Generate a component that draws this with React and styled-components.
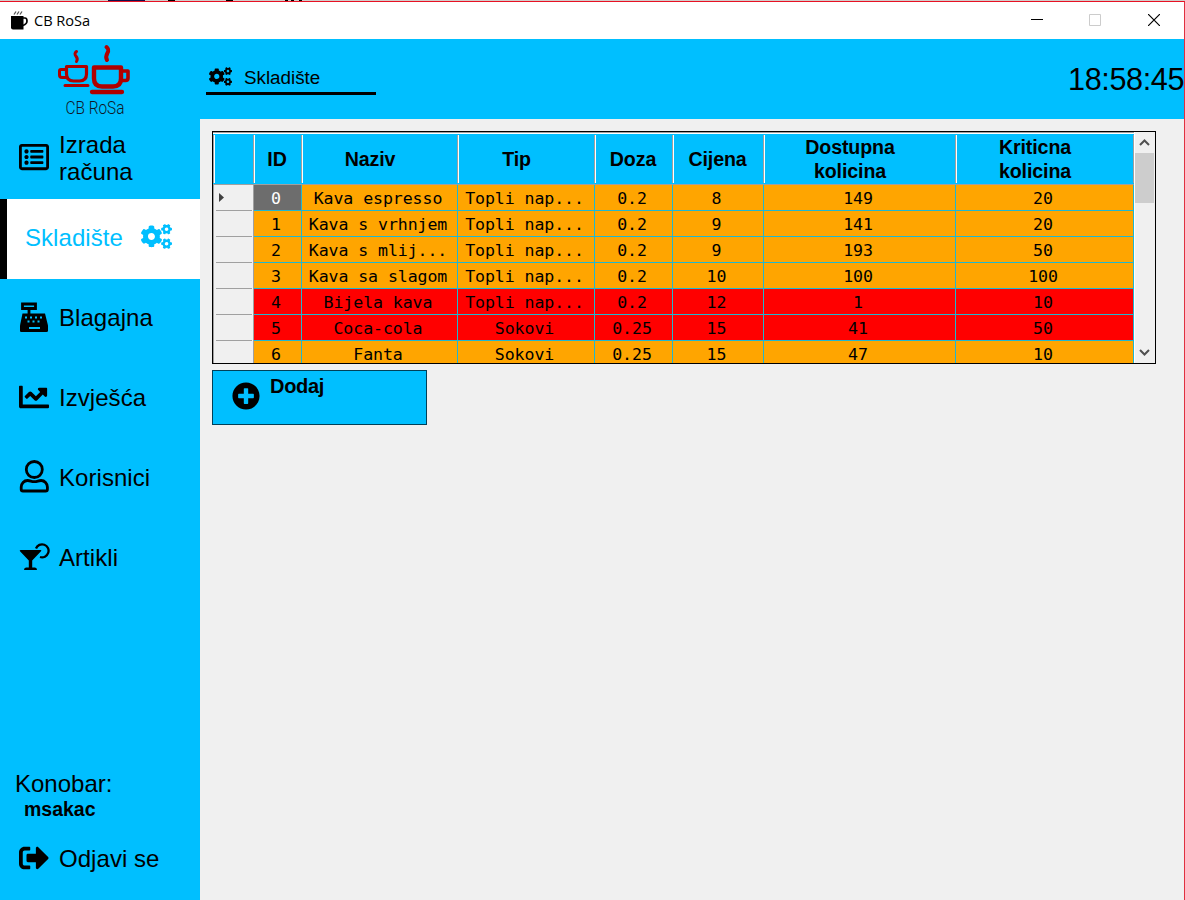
import React from "react";
import styled, { createGlobalStyle, css } from "styled-components";
import { FaCogs, FaRegListAlt, FaChartLine, FaSignOutAlt, FaPlusCircle } from "react-icons/fa";

const Global = createGlobalStyle`
  * { box-sizing: border-box; }
  body { margin: 0; background: #f0f0f0; overflow: hidden; }
  svg { display: block; flex: none; }
`;

const cyan = "#00bfff";

const Window = styled.div`
  width: 1185px;
  height: 900px;
  display: flex;
  flex-direction: column;
  background: #f0f0f0;
  font-family: "Liberation Sans", Arial, sans-serif;
  color: #000;
  overflow: hidden;
`;
const Backdrop = styled.div`
  height: 1px;
  flex: none;
  background: linear-gradient(90deg, #d0cdca 0 108px, #10104a 108px 145px, #d0cdca 145px 168px, #000 168px 175px, #d0cdca 175px 226px, #000 226px 233px, #d0cdca 233px 285px, #000 285px 288px, #d0cdca 288px 291px, #000 291px 294px, #d0cdca 294px 299px, #000 299px 302px, #d0cdca 302px);
`;
const Frame = styled.div`
  flex: 1;
  display: flex;
  flex-direction: column;
  border-top: 1px solid #e81123;
  border-right: 1px solid #e03040;
`;
const TitleBar = styled.header`
  height: 37px;
  flex: none;
  display: flex;
  align-items: center;
  background: #fff;
  padding: 0 1px 1px 10px;
`;
const Caption = styled.span`
  font: 14.6px/20px "Open Sans", sans-serif;
  letter-spacing: -0.05px;
  margin-left: 6px;
  flex: 1;
`;
const WindowButton = styled.span`
  width: 58.5px;
  display: flex;
  justify-content: center;
`;
const Body = styled.div`
  flex: 1;
  display: flex;
`;
const Sidebar = styled.nav`
  width: 200px;
  display: flex;
  flex-direction: column;
  background: ${cyan};
`;
const LogoBox = styled.div`
  height: 80px;
  padding-left: 50px;
`;
const NavItem = styled.div`
  height: 80px;
  display: flex;
  align-items: center;
  padding-left: 19px;
  font-size: 24px;
  line-height: 27px;
  ${({ $active }) => $active && css`
    background: #fff;
    color: ${cyan};
    border-left: 7px solid #000;
    padding-left: 18px;
    gap: 18px;
  `}
`;
const IconSlot = styled.span`
  width: 40px;
  flex: none;
  position: relative;
  top: ${({ $dy = 0 }) => $dy}px;
`;
const NavLabel = styled.span`
  width: ${({ $narrow }) => ($narrow ? "90px" : "auto")};
  padding-bottom: ${({ $narrow }) => ($narrow ? 2 : 4)}px;
  letter-spacing: 0.05px;
`;
const UserInfo = styled.div`
  margin-top: auto;
  padding-left: 15px;
  font-size: 24px;
  line-height: 27px;
  height: 50px;
`;
const UserName = styled.div`
  font-size: 19.5px;
  font-weight: bold;
  line-height: 24px;
  padding-left: 9px;
`;
const Main = styled.main`
  flex: 1;
  display: flex;
  flex-direction: column;
`;
const TopBar = styled.div`
  height: 80px;
  display: flex;
  justify-content: space-between;
  background: ${cyan};
  padding-left: 6px;
`;
const PageTitle = styled.div`
  width: 170px;
  height: 56px;
  border-bottom: 3px solid #000;
  padding: 26px 0 0 3px;
  display: flex;
  gap: 12px;
  font-size: 18.8px;
  line-height: 26px;
`;
const Clock = styled.div`
  font-size: 30.6px;
  letter-spacing: -0.4px;
  line-height: 80px;
`;
const Content = styled.section`
  padding: 12px;
`;
const GridBox = styled.div`
  width: 944px;
  height: 233px;
  border: 1px solid #000;
  display: flex;
  overflow: hidden;
`;
const Table = styled.div`
  width: 921px;
`;
const Row = styled.div`
  display: grid;
  grid-template-columns: 41px 48px 156px 137px 78px 91px 192px 178px;
`;
const HeadRow = styled(Row)`
  height: 53px;
  border-top: 1px solid #a0a0a0;
  border-bottom: 1px solid #a0a0a0;
  background: linear-gradient(#fff 0 1px, ${cyan} 1px);
`;
const HeadCell = styled.div`
  display: flex;
  align-items: center;
  justify-content: center;
  text-align: center;
  font-size: 19.6px;
  letter-spacing: -0.1px;
  line-height: 24px;
  font-weight: bold;
  margin: 2px 0 1px;
  padding-right: ${({ $sort }) => ($sort ? 20 : 2)}px;
  border-left: 1px solid #fff;
  border-right: 1px solid #a0a0a0;
  &:first-child { border-left: 1px solid #a0a0a0; box-shadow: inset 1px 0 #fff; }
`;
const BodyRow = styled(Row)`
  grid-template-rows: 26px;
  height: 26px;
`;
const RowHead = styled.div`
  border-left: 1px solid #a0a0a0;
  border-right: 1px solid #a0a0a0;
  padding: 0 1px 0 2px;
  display: flex;
`;
const RowHeadInner = styled.div`
  flex: 1;
  border-bottom: 1px solid #a0a0a0;
  padding: 7px 0 0 3px;
`;
const Cell = styled.div`
  height: 26px;
  overflow: hidden;
  font: 16.6px/25px "DejaVu Sans Mono", monospace;
  letter-spacing: -0.1px;
  text-align: center;
  white-space: pre;
  padding: 1px 3px 0 0;
  border-right: 1px solid #20b7d0;
  border-bottom: 1px solid #20b7d0;
  background: ${({ $low, $selected }) => ($selected ? "#6d6d6d" : $low ? "#ff0000" : "#ffa500")};
  color: ${({ $selected }) => ($selected ? "#fff" : "#000")};
`;
const Scrollbar = styled.div`
  width: 21px;
  background: #f0f0f0;
  border-left: 1px solid #fff;
  padding-right: 1px;
  display: flex;
  flex-direction: column;
  justify-content: space-between;
`;
const ScrollArrow = styled.div`
  height: 21px;
  display: flex;
  align-items: center;
  justify-content: center;
`;
const Thumb = styled.div`
  height: 50px;
  background: #cdcdcd;
  margin-bottom: auto;
`;
const AddButton = styled.button`
  width: 215px;
  height: 55px;
  margin-top: 6px;
  border: 1px solid #004058;
  border-radius: 0;
  background: ${cyan};
  color: #000;
  font: bold 20px/24px "Liberation Sans", Arial, sans-serif;
  letter-spacing: -0.3px;
  padding: 3px 0 0 19px;
  display: flex;
  align-items: flex-start;
  gap: 10px;
`;
const AddIcon = styled.span`
  padding-top: 8px;
`;

const Mug = () => (
  <svg width="18" height="20" viewBox="0 0 18 20">
    <path d="M1 6h12.500v13.500H3q-2 0-2-2z" fill="#000" />
    <path d="M13 8h2q2 0 2 3t-4 4.500" fill="none" stroke="#000" strokeWidth="1.700" />
    <path d="M4 4.500l2-3M7 4.500l2-3M10 4.500l2-3" stroke="#555" strokeWidth="1.300" fill="none" />
  </svg>
);
const Logo = () => (
  <svg width="90" height="80" viewBox="0 0 90 80">
    <g fill="none" stroke="#b00000" strokeLinecap="round" strokeLinejoin="round">
      <path d="M16.5 27.5h20v7.500q0 7-7 7h-6q-7 0-7-7z" strokeWidth="3.200" />
      <path d="M16 30.500H11q-1.500 0-1.500 1.500v4q0 2.500 2.500 2.500H17M15 46.500h23" strokeWidth="3" />
      <path d="M44 28.500h27v11q0 8-8 8H52q-8 0-8-8z" strokeWidth="4.400" />
      <path d="M72 32h6v7q0 2.500-2.500 2.500H71" strokeWidth="3.600" />
      <path d="M42 53h30" strokeWidth="4.300" />
      <path d="M26.500 12.500c-5 4 3.500 5 0 10" strokeWidth="3" />
      <path d="M56.500 8c5.500 5-3 6 .5 13" strokeWidth="4" />
    </g>
    <text x="15.500" y="75" fill="#101828" fontFamily="Roboto, sans-serif" fontSize="18" fontWeight="300" textLength="59" lengthAdjust="spacingAndGlyphs">CB RoSa</text>
  </svg>
);
const Register = () => (
  <svg width="30" height="30" viewBox="0 0 30 30">
    <path d="M3.500 2h13v4.500h-13zM10 7v5" fill="none" stroke="#000" strokeWidth="2.800" />
    <path d="M3.500 11.500h22.500l3 12v5q0 1.500-1.500 1.500h-25.500Q1 30 1 28.500v-5z" />
    <path d="M6 15.500h2M11 15.500h2M16 15.500h2M21 15.500h2M8.500 19.500h2M13.500 19.500h2M18.500 19.500h2M10 26h11" stroke={cyan} strokeWidth="1.900" />
  </svg>
);
const Person = () => (
  <svg width="30" height="33" viewBox="0 0 30 33" fill="none" stroke="#000" strokeWidth="2.800">
    <circle cx="15.300" cy="9.500" r="8" />
    <path d="M8.500 20.500c3 0 3.500 1.200 6.800 1.200s3.800-1.200 6.800-1.200c3.500 0 6.300 3 6.300 6.500v2.200q0 1.800-1.800 1.800H4q-1.800 0-1.800-1.800V27c0-3.500 2.800-6.500 6.300-6.500z" />
  </svg>
);
const Cocktail = () => (
  <svg width="32" height="28" viewBox="0 0 32 28">
    <path d="M2 7h19.500q1.500 0 .5 1.200L13.200 17.500v7H16q2 0 2 2.500H5q0-2.500 2-2.500h2.800v-7L1 8.200Q0 7 2 7z" />
    <path d="M17 5.500a6.500 6.500 0 1 1 4 8.500" fill="none" stroke="#000" strokeWidth="2.300" />
  </svg>
);
const Chevron = ({ down }) => (
  <svg width="11" height="7" viewBox="0 0 11 7">
    <path d={down ? "M1 1l4.500 4.500L10 1" : "M1 6l4.500-4.500L10 6"} fill="none" stroke="#505050" strokeWidth="2" />
  </svg>
);

const columns = [
  ["ID", false], ["Naziv", true], ["Tip", true], ["Doza", false], ["Cijena", false],
  [<>Dostupna<br />kolicina</>, true], [<>Kriticna<br />kolicina</>, true],
];
const rows = [
  ["0", "Kava espresso", "Topli nap...", "0.2", "8", "149", "20"],
  ["1", "Kava s vrhnjem", "Topli nap...", "0.2", "9", "141", "20"],
  ["2", "Kava s mlij...", "Topli nap...", "0.2", "9", "193", "50"],
  ["3", "Kava sa slagom", "Topli nap...", "0.2", "10", "100", "100"],
  ["4", "Bijela kava", "Topli nap...", "0.2", "12", "1", "10"],
  ["5", "Coca-cola", "Sokovi", "0.25", "15", "41", "50"],
  ["6", "Fanta", "Sokovi", "0.25", "15", "47", "10"],
];

export default function App() {
  return (
    <Window>
      <Global />
      <Backdrop />
      <Frame>
        <TitleBar>
          <Mug />
          <Caption>CB RoSa</Caption>
          <WindowButton><svg width="12" height="12"><path d="M0 5.500h12" stroke="#000" /></svg></WindowButton>
          <WindowButton><svg width="12" height="12"><path d="M.5.500h11v11H.5z" stroke="#ccc" fill="none" /></svg></WindowButton>
          <WindowButton><svg width="12" height="12"><path d="M0 0l12 12M12 0L0 12" stroke="#000" strokeWidth="1.200" /></svg></WindowButton>
        </TitleBar>
        <Body>
          <Sidebar>
            <LogoBox><Logo /></LogoBox>
            <NavItem><IconSlot $dy={-2}><FaRegListAlt size={30} /></IconSlot><NavLabel $narrow>Izrada računa</NavLabel></NavItem>
            <NavItem $active><NavLabel>Skladište</NavLabel><IconSlot $dy={-3}><FaCogs size={31} /></IconSlot></NavItem>
            <NavItem><IconSlot $dy={-2}><Register /></IconSlot><NavLabel>Blagajna</NavLabel></NavItem>
            <NavItem><IconSlot $dy={-2}><FaChartLine size={30} /></IconSlot><NavLabel>Izvješća</NavLabel></NavItem>
            <NavItem><IconSlot $dy={-3}><Person /></IconSlot><NavLabel>Korisnici</NavLabel></NavItem>
            <NavItem><IconSlot $dy={-2}><Cocktail /></IconSlot><NavLabel>Artikli</NavLabel></NavItem>
            <UserInfo>Konobar:<UserName>msakac</UserName></UserInfo>
            <NavItem><IconSlot $dy={-2}><FaSignOutAlt size={30} /></IconSlot><NavLabel>Odjavi se</NavLabel></NavItem>
          </Sidebar>
          <Main>
            <TopBar>
              <PageTitle><FaCogs size={23} />Skladište</PageTitle>
              <Clock>18:58:45</Clock>
            </TopBar>
            <Content>
              <GridBox>
                <Table>
                  <HeadRow>
                    <HeadCell />
                    {columns.map(([label, sort], i) => <HeadCell key={i} $sort={sort}><span>{label}</span></HeadCell>)}
                  </HeadRow>
                  {rows.map((row, r) => (
                    <BodyRow key={row[0]}>
                      <RowHead>
                        <RowHeadInner>
                          {r === 0 && <svg width="6" height="10"><path d="M0 1l5 4.500L0 10z" fill="#404040" /></svg>}
                        </RowHeadInner>
                      </RowHead>
                      {row.map((value, c) => (
                        <Cell key={c} $low={Number(row[5]) < Number(row[6])} $selected={r === 0 && c === 0}>{value}</Cell>
                      ))}
                    </BodyRow>
                  ))}
                </Table>
                <Scrollbar>
                  <ScrollArrow><Chevron /></ScrollArrow>
                  <Thumb />
                  <ScrollArrow><Chevron down /></ScrollArrow>
                </Scrollbar>
              </GridBox>
              <AddButton><AddIcon><FaPlusCircle size={28} /></AddIcon>Dodaj</AddButton>
            </Content>
          </Main>
        </Body>
      </Frame>
    </Window>
  );
}
